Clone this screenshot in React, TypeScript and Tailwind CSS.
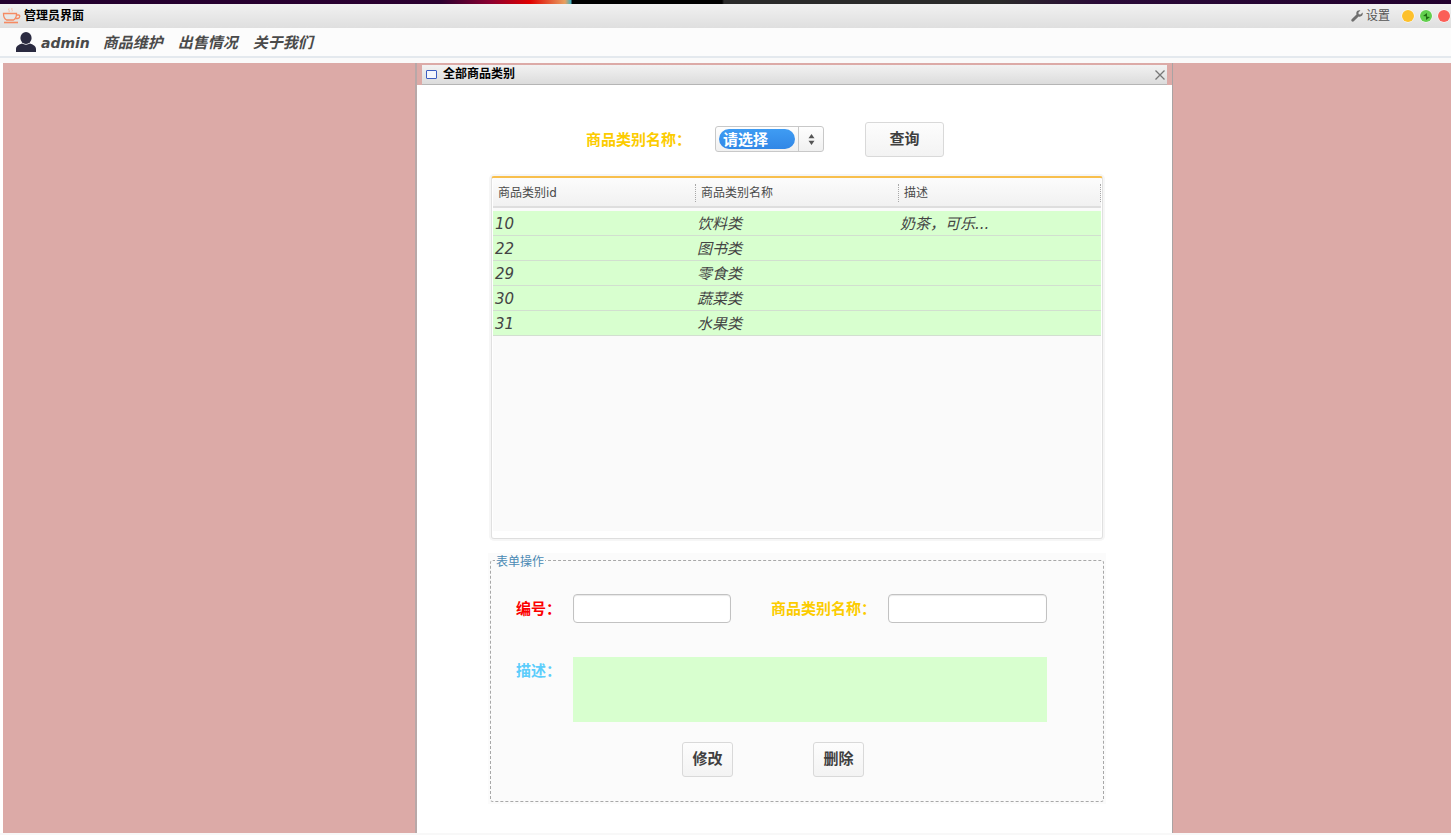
import React from "react";

const font = { fontFamily: '"DejaVu Sans","Noto Sans CJK SC",sans-serif' };

const rows = [
  ["10", "饮料类", "奶茶，可乐..."],
  ["22", "图书类", ""],
  ["29", "零食类", ""],
  ["30", "蔬菜类", ""],
  ["31", "水果类", ""],
];

function Cup() {
  return (
    <svg width="20" height="18" viewBox="0 0 20 18" fill="none" stroke="#f58a62" strokeWidth="1.3">
      <path d="M7 1.5c-1 1.5 1 2 0 3.5M10 1c-1 1.5 1 2 0 3.5" strokeWidth="0.9" stroke="#f9b9a0" />
      <path d="M1.5 6.5h13c0 3-1 5.5-3 6.5h-7c-2-1-3-3.5-3-6.5z" />
      <path d="M14.5 8h2c1.8 0 1.8 3-1 3.5h-2" />
      <path d="M2 15.5h14" strokeWidth="1.6" />
    </svg>
  );
}

function User() {
  return (
    <svg width="20" height="20" viewBox="0 0 20 20" fill="#2a2a40">
      <ellipse cx="10" cy="6" rx="5.6" ry="6" />
      <path d="M0 20v-3c0-3 3-4.500 6-5.500 2.500 1.500 5.500 1.500 8 0 3 1 6 2.500 6 5.500v3z" />
    </svg>
  );
}

function Wrench() {
  return (
    <svg width="12" height="12" viewBox="0 0 12 12" fill="#6f6f6f">
      <path d="M11.600 2.600 9.500 4.600 7.700 4.300 7.400 2.500 9.400.5C7.700-.1 5.800.8 5.400 2.500c-.2.700-.1 1.300.1 1.900L.7 9.200c-.6.600-.6 1.500 0 2.100s1.500.6 2.100 0l4.800-4.800c.6.200 1.200.3 1.900.1 1.700-.4 2.700-2.300 2.100-4z" />
    </svg>
  );
}

function PlainButton({ label, className }: { label: string; className: string }) {
  return (
    <button className={`flex items-center justify-center rounded-[3px] border border-[#d9d9d9] bg-gradient-to-b from-[#fdfdfd] to-[#f3f3f3] text-[15px] font-bold text-[#3f3f3f] ${className}`}>
      {label}
    </button>
  );
}

export default function App() {
  return (
    <div className="flex h-[835px] w-[1451px] flex-col overflow-hidden bg-white" style={font}>
      <div className="h-[4px] shrink-0 bg-[linear-gradient(90deg,#22002e_0,#2a0030_440px,#8a0030_490px,#e00000_530px,#e8a060_565px,#40b0c0_571px,#000_572px,#000_722px,#2a2a2a_724px,#2a2a2a_1000px,#2a0a38_1100px,#22002e_100%)]" />

      <div className="flex h-[24px] shrink-0 items-center bg-gradient-to-b from-[#f1f1f1] to-[#dfdfdf]">
        <div className="ml-[2px]"><Cup /></div>
        <span className="ml-[2px] text-[12px] font-bold text-black">管理员界面</span>
        <div className="ml-auto mr-[1px] flex items-center">
          <Wrench />
          <span className="ml-[3px] text-[12px] text-[#555]">设置</span>
          <span className="ml-[12px] h-[12px] w-[12px] rounded-full bg-[#fdc02c] shadow-[0_0_0_0.5px_#ffffff]" />
          <span className="ml-[6px] flex h-[12px] w-[12px] items-center justify-center rounded-full bg-[#62cf4e] shadow-[0_0_0_0.5px_#ffffff]">
            <svg width="9" height="9" viewBox="0 0 9 9" fill="#1f6a12"><path d="M1 4 5 1 5 4.500zM8 5 4 8 4 4.500z" /></svg>
          </span>
          <span className="ml-[6px] h-[12px] w-[12px] rounded-full bg-[#fb5f57] shadow-[0_0_0_0.5px_#ffffff]" />
        </div>
      </div>

      <div className="flex h-[28px] shrink-0 items-center bg-[#fcfcfc] pl-[16px] font-bold italic text-[#4a4a4a]">
        <User />
        <span className="ml-[5px] pt-[2px] text-[14px]">admin</span>
        <span className="ml-[13px] pt-[2px] text-[15px]">商品维护</span>
        <span className="ml-[15px] pt-[2px] text-[15px]">出售情况</span>
        <span className="ml-[15px] pt-[2px] text-[15px]">关于我们</span>
      </div>

      <div className="h-[2px] shrink-0 bg-[#e4e9ee]" />
      <div className="h-[5px] shrink-0 bg-[#fafafa]" />

      <div className="ml-[3px] flex min-h-0 flex-1 bg-[#dcaaa7] pl-[412px]">
        <div className="h-[800px] w-[758px] border-l-2 border-r border-l-[#b8a8a8] border-r-[#a9a3a3] bg-white">
          <div className="flex h-[22px] items-stretch bg-[#dcaaa7] px-[5px]">
            <div className="mt-[2px] flex h-[20px] flex-1 items-center border-b border-[#b5b5b5] bg-gradient-to-b from-[#f2f2f2] to-[#dcdcdc]">
              <span className="ml-[4px] h-[9px] w-[11px] rounded-[1px] border border-[#3c5cc0] bg-[#f4f6fc]" />
              <span className="ml-[6px] pb-[2px] text-[12px] font-bold text-black">全部商品类别</span>
              <svg className="ml-auto mr-[2px]" width="10" height="10" viewBox="0 0 10 10" stroke="#777" strokeWidth="1.300"><path d="M.5.5l9 9M9.500.5l-9 9" /></svg>
            </div>
          </div>

          <div className="flex h-[91px] items-start pl-[169px] pt-[37px]">
            <span className="mt-[7px] w-[105px] text-[15px] font-bold text-[#fccc00]">商品类别名称：</span>
            <div className="ml-[24px] mt-[4px] flex h-[26px] w-[109px] rounded-[3px] border border-[#c8c8c8] bg-gradient-to-b from-[#fefefe] to-[#f0f0f0]">
              <div className="flex flex-1 items-center border-r border-[#c8c8c8] pl-[3px]">
                <span className="flex h-[20px] w-[76px] items-center rounded-full bg-gradient-to-b from-[#3f9cf3] to-[#3187e6] pl-[4px] pt-[2px] text-[15px] font-bold leading-none text-white">请选择</span>
              </div>
              <div className="flex w-[24px] items-center justify-center">
                <svg width="7" height="11" viewBox="0 0 7 11" fill="#555"><path d="M3.500 0 6.500 4.300H.5zM3.500 11 .5 6.700h6z" /></svg>
              </div>
            </div>
            <PlainButton label="查询" className="ml-[41px] h-[35px] w-[79px]" />
          </div>

          <div className="ml-[74px] h-[363px] w-[612px] rounded-[3px] border-x border-b border-t-2 border-x-[#e0e0e0] border-b-[#dedede] border-t-[#f8bf4d] bg-white px-[1px] shadow-[0_0_0_2px_#f6f6f6]">
            <div className="flex h-[30px] border-b-2 border-[#dedede] bg-gradient-to-b from-[#fcfcfc] to-[#f1f1f1] pt-[1px] text-[12px] text-[#4a4a4a]">
              {[["商品类别id", "w-[203px]"], ["商品类别名称", "w-[203px]"], ["描述", "w-[202px]"]].map(([h, w]) => (
                <div key={h} className={`flex items-center pl-[5px] ${w}`}>
                  <span className="flex-1">{h}</span>
                  <span className="h-[18px] border-r border-dotted border-[#a8a8a8]" />
                </div>
              ))}
            </div>
            <div className="h-[323px] bg-[#fafafa] pt-[3px]">
              {rows.map((r) => (
                <div key={r[0]} className="flex h-[25px] items-center border-b border-[#d2dfd0] bg-[#d8ffcf] pt-[2px] text-[15px] italic text-[#444]">
                  <span className="w-[203px] pl-[2px]">{r[0]}</span>
                  <span className="w-[203px] pl-[1px]">{r[1]}</span>
                  <span className="w-[202px] pl-[1px]">{r[2]}</span>
                </div>
              ))}
            </div>
          </div>

          <div className="ml-[71px] mt-[14px] w-[618px] bg-[#fbfbfb] px-[2px] pb-[2px] pt-[7px]">
            <div className="relative h-[242px] w-[614px] rounded-[3px] border border-dashed border-[#a8a8a8]">
              <span className="absolute left-[4px] top-[-6px] bg-[#fbfbfb] px-[1px] text-[12px] leading-[15px] text-[#4a8ab4]">表单操作</span>
              <div className="flex h-[96px] items-start pl-[25px] pt-[33px]">
                <span className="mt-[4px] w-[57px] text-[15px] font-bold text-[#fb0000]">编号：</span>
                <input className="h-[29px] w-[158px] rounded-[4px] border border-[#c2c2c2] bg-white shadow-[inset_0_1px_1px_#e8e8e8]" />
                <span className="ml-[40px] mt-[4px] w-[117px] text-[15px] font-bold text-[#fccc00]">商品类别名称：</span>
                <input className="h-[29px] w-[159px] rounded-[4px] border border-[#c2c2c2] bg-white shadow-[inset_0_1px_1px_#e8e8e8]" />
              </div>
              <div className="flex h-[85px] items-start pl-[25px]">
                <span className="mt-[3px] w-[57px] text-[15px] font-bold text-[#5ccdfb]">描述：</span>
                <div className="h-[65px] w-[474px] bg-[#d8ffcf]" />
              </div>
              <div className="flex pl-[191px]">
                <PlainButton label="修改" className="h-[35px] w-[51px]" />
                <PlainButton label="删除" className="ml-[80px] h-[35px] w-[51px]" />
              </div>
            </div>
          </div>
        </div>
      </div>
      <div className="h-[2px] shrink-0 bg-[#f8f8f8]" />
    </div>
  );
}
